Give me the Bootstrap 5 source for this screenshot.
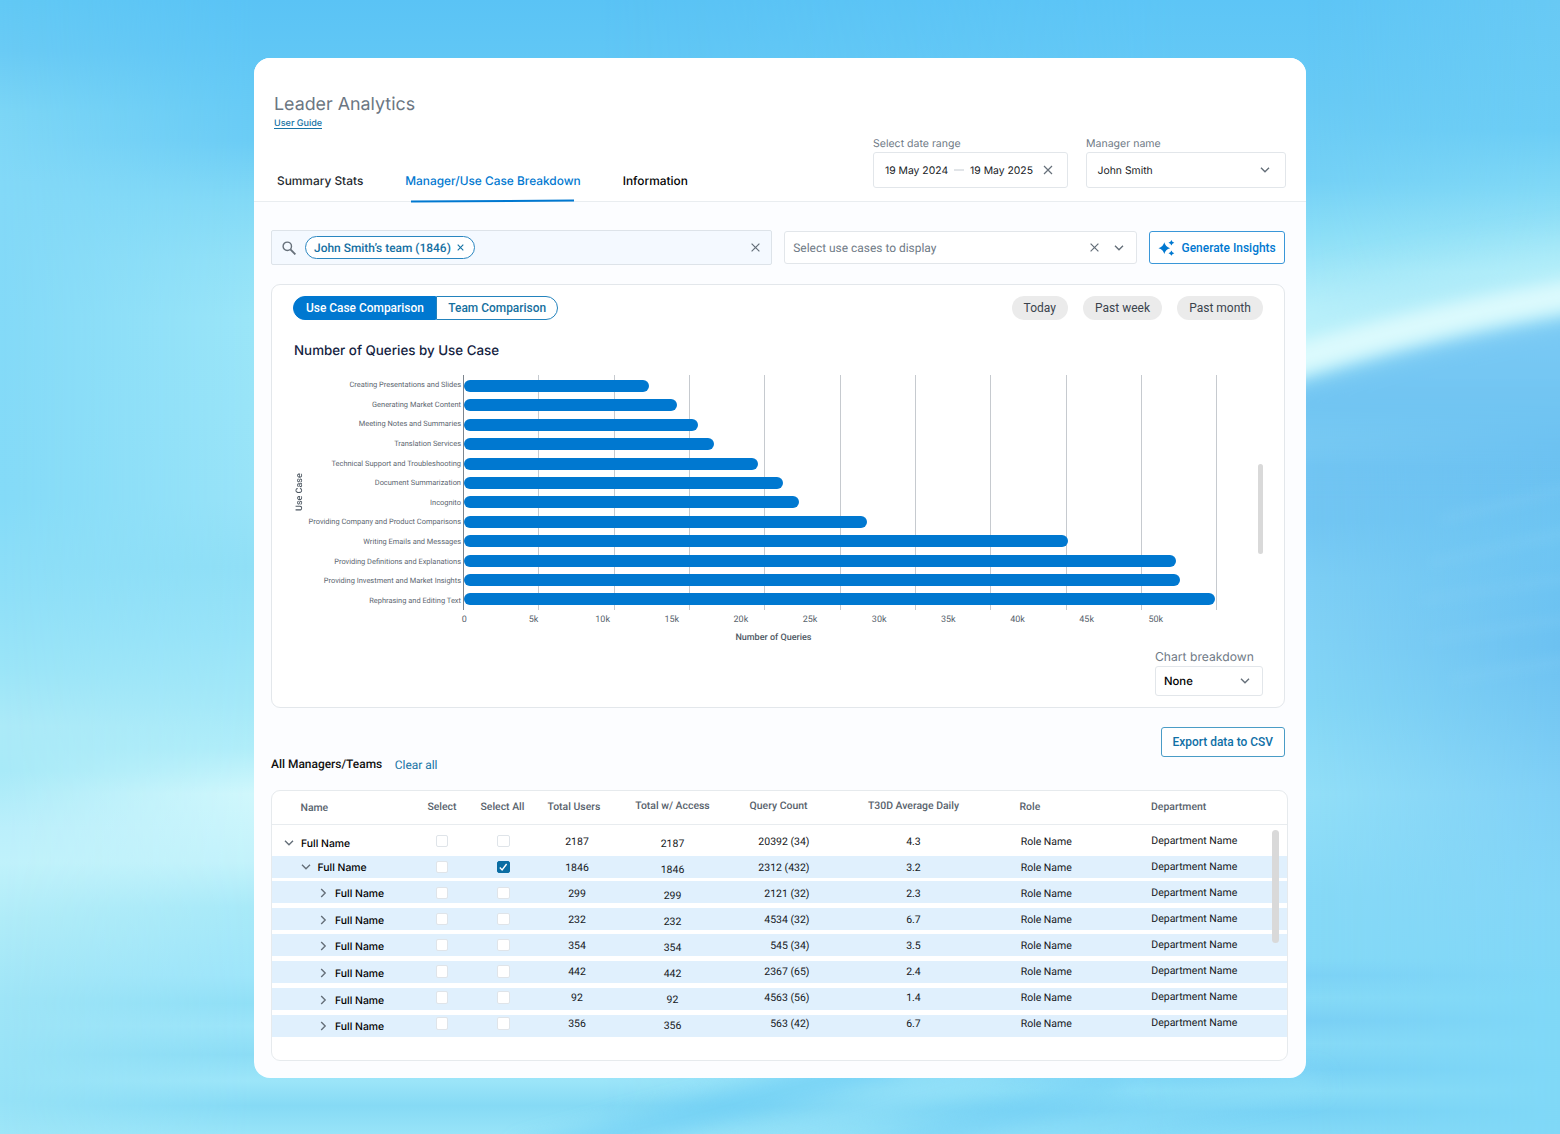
<!doctype html>
<html lang="en">
<head>
<meta charset="utf-8">
<title>Leader Analytics</title>
<meta name="viewport" content="width=device-width, initial-scale=1">
<link href="https://cdn.jsdelivr.net/npm/bootstrap@5.3.0/dist/css/bootstrap.min.css" rel="stylesheet">
<style>
:root{--brand:#0078d0;--link:#0f70a6;--line:#e2e6ea;--muted:#6f7a86;--inter:Inter,"Open Sans",sans-serif;--roboto:Roboto,"Open Sans",sans-serif}
body{font-family:var(--roboto);font-size:11.94px;line-height:16px;color:#1c1f23;overflow:hidden;background:#86daf7;text-rendering:geometricPrecision}
.backdrop{position:absolute;inset:0;width:1560px;height:1134px;z-index:-1}
.stage{width:1560px;height:1134px;padding:58px 254px 56px}
.panel{height:1020px;background:#fcfdff;border-radius:16px;overflow:hidden}
svg.ico{display:block;flex:none;fill:none;stroke:#66707a;stroke-width:1.4}
.nudge{padding-top:2px}
.nudge-sm{padding-top:1px}
.top-bar{height:144px;background:#fff;border-bottom:1px solid #e9edf0;padding:0 20.5px 0 20px}
.page-title{font:400 17.85px/26px var(--inter);color:#6b7682;margin:34px 0 0}
.guide{font:500 9.05px/13px var(--inter);height:12px;color:#1673a5;text-decoration:none;border-bottom:1px solid #1673a5;align-self:flex-start;margin-top:-1px}
.tabs{gap:42px;margin:41px 0 0 3px}
.tabs .nav-link{padding:0;font:500 11.88px/22px var(--inter);height:32px;color:#22272d;position:relative}
.tabs .nav-link.last-tab{color:#000}
.tabs .nav-link.active{color:var(--brand)}
.tabs .nav-link.active::after{content:"";position:absolute;left:6px;right:6px;bottom:0;height:2px;background:var(--brand);transform:rotate(-.3deg)}
.filters{gap:18px;padding-bottom:13.5px}
.field-label{font:400 10.55px/16px var(--inter);color:#6f7a86}
.field{height:36px;border:1px solid var(--line);border-radius:3px;background:#fff;font:400 10.38px/16px var(--inter);color:#16191d}
.content{padding:28px 17px 0}
.tools{gap:12px;width:1014px;height:35px}
.search-box{width:501px;height:35px;background:#f4f9ff;border:1px solid #dde3e9;border-radius:2px;padding:0 11px 0 10px}
.chip{height:23px;border:1px solid #2a86c0;border-radius:12px;background:#fff;color:#156fa2;font-weight:500;padding:0 10px 0 8px;gap:6px;margin-left:9px}
.case-select{width:353px;height:33px;border:1px solid var(--line);border-radius:3px;background:#fff;color:#6f7a86;padding:0 12px 0 8.5px}
.btn-line{border:1px solid #3a97d8;border-radius:3px;background:#fff;color:var(--brand);font:500 11.95px/16px var(--roboto);padding:0;white-space:nowrap}
.chart-card{width:1014px;height:424px;margin-top:19px;border:1px solid #e3e7eb;border-radius:9px;background:#fff;padding:11px 21px 0 21.4px}
.switcher .btn{height:24px;padding:0;font:500 11.93px/16px var(--roboto);border:1px solid #2383bd;color:#156f9e;background:#fff}
.switcher .btn.active{background:var(--brand);border-color:var(--brand);color:#fff}
.range{height:24px;border-radius:12px;background:#ebebeb;color:#3a434d;font:400 12px/24px var(--roboto);padding:0;border:0}
.chart-title{font:500 13.36px/22px var(--inter);height:20px;color:#14233f;margin:20px 0 0 .6px}
.plot-row{height:235px;margin-top:15px}
.y-title{width:12px;margin-left:1px;font:500 9px/12px var(--roboto);color:#4f5963;writing-mode:vertical-rl;transform:rotate(180deg);text-align:center}
.labels{width:154.6px;font-size:7.44px;line-height:19.6px;color:#5d6771;text-align:right;white-space:nowrap;padding-top:.2px}
.labels div{height:19.6px}
.plot{display:grid;width:756px;margin-left:2px;height:235px}
.plot>*{grid-area:1/1}
.grid-line{width:75.35px;border-left:1px solid #c6cacf}
.grid-line:first-child{border-color:#7d858e}
.grid-line:last-child{width:1px}
.bars{padding:1.3px 0 0 .8px}
.bar-slot{height:19.41px}
.bar-fill{height:12px;border-radius:6px;background:var(--brand)}
.thumb{background:#d9d9d9;border-radius:4px}
.ticks{height:19px;margin-left:136.4px}
.ticks div{width:69.15px;text-align:center;font-size:9px;line-height:21px;color:#59636d}
.x-title{font:500 9px/19px var(--roboto);height:17px;color:#4f5963;margin-left:442px}
.breakdown{width:108px;margin-left:auto;margin-top:2px}
.breakdown .caption-text{font:400 12.15px/17px var(--inter);height:16px;color:#6f7a86}
.breakdown .field{height:30px;margin-top:2px;font:500 11.3px/16px var(--inter);color:#000;padding:0 12px 0 8px}
.export{width:124.5px;height:30px;color:#0f70a6;border-color:#4a9cc6}
.export-row{width:1014px;margin-top:19px}
.list-head{height:15px}
.list-head .strong-text{font:500 11.95px/15px var(--roboto);color:#111}
.team-table{width:1017px;height:271px;margin-top:18px;border:1px solid #e6eaed;border-radius:9px;background:#fff;overflow:hidden}
.t-head{height:34px;border-bottom:1px solid #e8ecef;font-weight:500;font-size:10.45px;line-height:15.5px;color:#59636d}
.t-body{display:grid;height:235px;font-size:10.5px;color:#15181c}
.t-body>*{grid-area:1/1}
.band{height:22px;background:#e0f0fd;margin-top:5px}
.band:first-child{margin-top:31px}.band:nth-child(2){margin-top:3px}.band:nth-child(4){margin-top:4px}
.c-name{width:140px}.c-sel{width:60px}.c-all{width:63px}.c-users{width:84px}.c-acc{width:107px}.c-qry{width:83.5px}.c-avg{width:208px}.c-role{width:130.5px;padding-left:3.2px}.c-dep{width:120px;padding-left:3.3px}
.t-body .c{padding-top:3px}.t-body .c-acc{padding-top:5px}.t-body .c-dep{padding-top:2px}
.cell{height:26.07px;line-height:27px;white-space:nowrap}
.t-body .c-name{padding-top:7.35px;font:500 10.42px/16px var(--inter);color:#000}
.node{height:26.7px;gap:6px;padding-left:45px}
.node.root{height:21.3px;padding-left:11px}
.node.child{height:26px;padding-left:27.5px}
.tick-box{width:12.4px;height:12.4px;border:1px solid #dfe4e9;border-radius:2px;background:#fff}
.tick-box.on{background:#0b6da3;border-color:#0b6da3}
.t-scroll{width:7.5px;height:113px;margin:5px 8px 0 auto}
</style>
</head>
<body>
<svg class="backdrop" viewBox="0 0 1560 1134" preserveAspectRatio="none" aria-hidden="true">
<defs>
<linearGradient id="a" x1="0" x2="0" y1="0" y2="1134" gradientUnits="userSpaceOnUse"><stop offset="0" stop-color="#62c9f5"/><stop offset=".045" stop-color="#6acbf5"/><stop offset=".1" stop-color="#7cd6f6"/><stop offset=".16" stop-color="#83d9f8"/><stop offset=".44" stop-color="#84dbf8"/><stop offset=".53" stop-color="#90e0f8"/><stop offset=".59" stop-color="#9be5f8"/><stop offset=".64" stop-color="#aceaf8"/><stop offset=".68" stop-color="#a8eaf8"/><stop offset=".73" stop-color="#bbeffb"/><stop offset=".76" stop-color="#c0f2fb"/><stop offset=".81" stop-color="#b0ecf8"/><stop offset=".88" stop-color="#9fe5f7"/><stop offset=".97" stop-color="#96e2f7"/><stop offset="1" stop-color="#9ee6f8"/></linearGradient>
<linearGradient id="b" x1="0" x2="0" y1="0" y2="1134" gradientUnits="userSpaceOnUse"><stop offset="0" stop-color="#5ac3f5"/><stop offset=".09" stop-color="#66caf5"/><stop offset=".125" stop-color="#6bccf5"/><stop offset=".176" stop-color="#82d9f6"/><stop offset=".23" stop-color="#92e1f7"/><stop offset=".28" stop-color="#9ae5f8"/><stop offset=".44" stop-color="#98e3f8"/><stop offset=".5" stop-color="#90dff6"/><stop offset=".56" stop-color="#98e3f8"/><stop offset=".62" stop-color="#a4e8f8"/><stop offset=".66" stop-color="#b0edf9"/><stop offset=".7" stop-color="#d0f7fc"/><stop offset=".76" stop-color="#c3f2fb"/><stop offset=".8" stop-color="#a8e9f8"/><stop offset=".86" stop-color="#9ee5fa"/><stop offset=".885" stop-color="#90dff6"/><stop offset=".905" stop-color="#9be4f9"/><stop offset=".93" stop-color="#8bdcf5"/><stop offset=".953" stop-color="#9ce5f9"/><stop offset=".975" stop-color="#86daf5"/><stop offset="1" stop-color="#98e4f8"/></linearGradient>
<linearGradient id="c" x1="0" x2="0" y1="0" y2="1134" gradientUnits="userSpaceOnUse"><stop offset="0" stop-color="#5dc5f6"/><stop offset=".09" stop-color="#68caf5"/><stop offset=".16" stop-color="#74d1f6"/><stop offset=".21" stop-color="#8cdff7"/><stop offset=".255" stop-color="#aaeaf9"/><stop offset=".3" stop-color="#c4f3fb"/><stop offset=".36" stop-color="#90dbf5"/><stop offset=".41" stop-color="#72c5f3"/><stop offset=".46" stop-color="#72c6f3"/><stop offset=".51" stop-color="#7ccef5"/><stop offset=".57" stop-color="#82d3f6"/><stop offset=".62" stop-color="#84d7f6"/><stop offset=".7" stop-color="#92dff8"/><stop offset=".79" stop-color="#86d9f7"/><stop offset=".845" stop-color="#84d9f7"/><stop offset=".86" stop-color="#7cd2f6"/><stop offset=".88" stop-color="#86daf7"/><stop offset=".9" stop-color="#7ad0f5"/><stop offset=".92" stop-color="#86daf7"/><stop offset=".943" stop-color="#78d1f5"/><stop offset=".962" stop-color="#88dcf7"/><stop offset=".98" stop-color="#78d2f5"/><stop offset="1" stop-color="#84daf7"/></linearGradient>
<linearGradient id="d" x1="0" x2="0" y1="0" y2="1134" gradientUnits="userSpaceOnUse"><stop offset="0" stop-color="#68c9f4"/><stop offset=".115" stop-color="#6ccdf5"/><stop offset=".168" stop-color="#82d9f6"/><stop offset=".212" stop-color="#9ce4f7"/><stop offset=".24" stop-color="#a8e9f8"/><stop offset=".28" stop-color="#8cd4f5"/><stop offset=".31" stop-color="#74c5f3"/><stop offset=".39" stop-color="#6abff0"/><stop offset=".47" stop-color="#6ec5f2"/><stop offset=".57" stop-color="#6cc1f1"/><stop offset=".635" stop-color="#76c8f3"/><stop offset=".7" stop-color="#80d0f6"/><stop offset=".79" stop-color="#84d6f7"/><stop offset=".88" stop-color="#80d8f7"/><stop offset="1" stop-color="#80d8f7"/></linearGradient>
<linearGradient id="e" x1="0" x2="0" y1="310" y2="480" gradientUnits="userSpaceOnUse"><stop offset="0" stop-color="#7ccbf5"/><stop offset=".6" stop-color="#70c4f2"/><stop offset="1" stop-color="#70c5f3" stop-opacity="0"/></linearGradient>
<linearGradient id="h0" x1="0" x2="254" y1="0" y2="0" gradientUnits="userSpaceOnUse"><stop stop-color="#000"/><stop offset="1" stop-color="#fff"/></linearGradient>
<linearGradient id="h1" x1="600" x2="1180" y1="0" y2="0" gradientUnits="userSpaceOnUse"><stop stop-color="#000"/><stop offset="1" stop-color="#fff"/></linearGradient>
<linearGradient id="h2" x1="1306" x2="1560" y1="0" y2="0" gradientUnits="userSpaceOnUse"><stop stop-color="#000"/><stop offset="1" stop-color="#fff"/></linearGradient>
<mask id="m0"><path fill="url(#h0)" d="M0 0h1560v1134H0z"/></mask><mask id="m1"><path fill="url(#h1)" d="M0 0h1560v1134H0z"/></mask><mask id="m2"><path fill="url(#h2)" d="M0 0h1560v1134H0z"/></mask>
<filter id="s5" x="-20%" y="-50%" width="140%" height="200%"><feGaussianBlur stdDeviation="6"/></filter>
<filter id="s7" x="-20%" y="-50%" width="140%" height="200%"><feGaussianBlur stdDeviation="8"/></filter>
<filter id="s9" x="-20%" y="-80%" width="140%" height="260%"><feGaussianBlur stdDeviation="11"/></filter>
<filter id="s20" x="-20%" y="-80%" width="140%" height="260%"><feGaussianBlur stdDeviation="22"/></filter>
</defs>
<path fill="url(#a)" d="M0 0h1560v1134H0z"/>
<path fill="url(#b)" mask="url(#m0)" d="M0 0h1560v1134H0z"/>
<path fill="url(#c)" mask="url(#m1)" d="M0 0h1560v1134H0z"/>
<path fill="url(#d)" mask="url(#m2)" d="M0 0h1560v1134H0z"/>
<path d="M1180 372Q1400 300 1680 270" fill="none" stroke="#b8f0fa" stroke-width="50" filter="url(#s20)"/>
<path d="M1180 425Q1400 335 1700 308V480H1180z" fill="url(#e)" filter="url(#s9)"/>
<path d="M1180 400Q1400 314 1700 275" fill="none" stroke="#dcfafd" stroke-width="30" filter="url(#s7)"/>
<g fill="none" opacity=".7" filter="url(#s9)">
<path d="M520 1160L900 1060" stroke="#6ccdf5" stroke-width="26"/><path d="M700 1160L1000 1070" stroke="#94e1f8" stroke-width="20"/><path d="M820 1170L1120 1080" stroke="#74d0f5" stroke-width="18"/><path d="M930 1160L1320 1080" stroke="#8bddf8" stroke-width="16"/>
</g>
<g fill="none" stroke="#8dd2f6" stroke-width="8" opacity=".25" filter="url(#s5)"><path d="M1440 520L1570 488M1430 563L1570 532M1420 600L1570 578M1430 640L1570 618M1450 680L1570 660"/></g>
</svg>

<main class="stage">
<div class="panel">
<header class="top-bar d-flex justify-content-between">
  <div class="d-flex flex-column">
    <h1 class="page-title">Leader Analytics</h1>
    <a class="guide" href="#">User Guide</a>
    <nav class="nav tabs flex-nowrap">
      <a class="nav-link" href="#">Summary Stats</a>
      <a class="nav-link active" href="#">Manager/Use Case Breakdown</a>
      <a class="nav-link last-tab" href="#">Information</a>
    </nav>
  </div>
  <div class="filters d-flex align-items-end">
    <div>
      <div class="field-label">Select date range</div>
      <div class="field d-flex align-items-center" style="width:195px;padding-left:11px">
        <span class="nudge">19 May 2024</span>
        <svg class="ico" style="margin:0 6px" width="10" height="2"><path d="M0 1h10" stroke="#c3cad1" stroke-width="1"/></svg>
        <span class="nudge">19 May 2025</span>
        <svg class="ico" style="margin-left:10px" width="10" height="10"><path d="M1 1l8 8M9 1l-8 8" stroke-width="1.2"/></svg>
      </div>
    </div>
    <div>
      <div class="field-label">Manager name</div>
      <div class="field d-flex align-items-center justify-content-between" style="width:199.5px;padding:0 14.5px 0 10.6px">
        <span class="nudge">John Smith</span>
        <svg class="ico" width="10" height="6"><path d="M1 .8l4 4 4-4"/></svg>
      </div>
    </div>
  </div>
</header>

<section class="content">
  <div class="tools d-flex align-items-center">
    <div class="search-box d-flex align-items-center">
      <svg class="ico" width="14" height="14"><circle cx="5.3" cy="5.3" r="4.2"/><path d="M8.4 8.4l5 5" stroke-width="1.9"/></svg>
      <span class="chip d-flex align-items-center"><span class="nudge-sm">John Smith’s team (1846)</span><svg class="ico" style="stroke:#1673a5" width="7" height="7"><path d="M.7.7l5.6 5.6M6.3.7L.7 6.3" stroke-width="1.1"/></svg></span>
      <svg class="ico ms-auto" width="9" height="9"><path d="M.6.6l7.8 7.8M8.4.6L.6 8.4" stroke-width="1.2"/></svg>
    </div>
    <div class="case-select d-flex align-items-center">
      <span class="nudge-sm">Select use cases to display</span>
      <svg class="ico ms-auto" width="9" height="9"><path d="M.6.6l7.8 7.8M8.4.6L.6 8.4" stroke-width="1.2"/></svg>
      <svg class="ico" style="margin-left:14.5px" width="10" height="6"><path d="M1 .8l4 4 4-4"/></svg>
    </div>
    <button class="btn btn-line d-flex align-items-center" style="width:136.5px;height:33px;padding-left:8.5px;gap:6.5px">
      <svg class="ico" style="fill:#0078d0;stroke:none" width="17" height="16"><path d="M6.3 2.3Q7.4 7 12.1 8.2 7.4 9.4 6.3 14 5.2 9.4 .5 8.2 5.2 7 6.3 2.3zM13.4 0q.6 2.2 2.9 2.8-2.3.6-2.9 2.8-.6-2.2-2.9-2.8 2.3-.6 2.9-2.8zM13.4 10.4q.6 2.2 2.9 2.8-2.3.6-2.9 2.8-.6-2.2-2.9-2.8 2.3-.6 2.9-2.8z"/></svg>
      <span class="nudge-sm">Generate Insights</span>
    </button>
  </div>

  <div class="chart-card">
    <div class="d-flex justify-content-between">
      <div class="switcher d-flex">
        <button class="btn active rounded-0 rounded-start-pill" style="width:143px">Use Case Comparison</button>
        <button class="btn rounded-0 rounded-end-pill" style="width:121.6px">Team Comparison</button>
      </div>
      <div class="d-flex" style="gap:15px">
        <button class="btn range" style="width:56.5px">Today</button>
        <button class="btn range" style="width:79px">Past week</button>
        <button class="btn range" style="width:86px">Past month</button>
      </div>
    </div>
    <h2 class="chart-title">Number of Queries by Use Case</h2>
    <div class="plot-row d-flex">
      <div class="y-title">Use Case</div>
      <div class="labels" id="labels"></div>
      <div class="plot">
        <div class="d-flex" id="gridlines"></div>
        <div class="bars" id="bars"></div>
      </div>
      <div class="thumb ms-auto" style="width:5px;height:90px;margin-top:89px"></div>
    </div>
    <div class="ticks d-flex" id="ticks"></div>
    <div class="x-title">Number of Queries</div>
    <div class="breakdown">
      <div class="caption-text text-nowrap">Chart breakdown</div>
      <div class="field d-flex align-items-center justify-content-between"><span>None</span><svg class="ico" width="10" height="6"><path d="M1 .8l4 4 4-4"/></svg></div>
    </div>
  </div>

  <div class="export-row d-flex justify-content-end"><button class="btn btn-line export">Export data to CSV</button></div>
  <div class="list-head d-flex align-items-center"><span class="strong-text">All Managers/Teams</span><a href="#" class="text-decoration-none" style="color:#1673a5;margin-left:12.5px;padding-top:1px">Clear all</a></div>

  <div class="team-table">
    <div class="t-head d-flex">
      <div class="c-name" style="padding:9px 0 0 28.5px">Name</div>
      <div class="c-sel text-center" style="padding-top:8px">Select</div>
      <div class="c-all" style="padding:8px 0 0 8.5px">Select All</div>
      <div class="c-users" style="padding:8px 0 0 12.5px">Total Users</div>
      <div class="c-acc text-center" style="padding-top:7px">Total w/ Access</div>
      <div class="c-qry text-end" style="padding:7px 2px 0 0">Query Count</div>
      <div class="c-avg text-center" style="padding-top:7px">T30D Average Daily</div>
      <div class="c-role" style="padding:8px 0 0 2px">Role</div>
      <div class="c-dep" style="padding:8px 0 0 3px">Department</div>
    </div>
    <div class="t-body">
      <div id="bands"></div>
      <div class="d-flex" id="cols"></div>
    </div>
  </div>
</section>
</div>
</main>

<script src="https://cdn.jsdelivr.net/npm/bootstrap@5.3.0/dist/js/bootstrap.bundle.min.js"></script>
<script>
const put = (id, html) => document.getElementById(id).innerHTML = html;
const cases = [["Creating Presentations and Slides",185.5],["Generating Market Content",213],["Meeting Notes and Summaries",234.5],["Translation Services",250],["Technical Support and Troubleshooting",294],["Document Summarization",319.5],["Incognito",335],["Providing Company and Product Comparisons",403.5],["Writing Emails and Messages",604.5],["Providing Definitions and Explanations",712.5],["Providing Investment and Market Insights",716],["Rephrasing and Editing Text",751.5]];
put('labels', cases.map(c => `<div>${c[0]}</div>`).join(''));
put('bars', cases.map(c => `<div class="bar-slot d-flex align-items-center"><div class="bar-fill" style="width:${c[1]}px"></div></div>`).join(''));
put('gridlines', '<div class="grid-line flex-shrink-0"></div>'.repeat(11));
put('ticks', ['0','5k','10k','15k','20k','25k','30k','35k','40k','45k','50k'].map(t => `<div>${t}</div>`).join(''));
put('bands', '<div class="band"></div>'.repeat(7));

const rows = [["2187","20392 (34)","4.3"],["1846","2312 (432)","3.2"],["299","2121 (32)","2.3"],["232","4534 (32)","6.7"],["354","545 (34)","3.5"],["442","2367 (65)","2.4"],["92","4563 (56)","1.4"],["356","563 (42)","6.7"]];
const down = '<svg class="ico" width="12" height="10"><path d="M2 2.8l4 4 4-4"/></svg>', right = '<svg class="ico" width="12" height="10"><path d="M4.2.9l4 4.1-4 4.1"/></svg>';
const box = on => `<div class="cell d-flex align-items-center justify-content-center"><span class="tick-box ${on ? 'on' : ''}">${on ? '<svg class="ico" style="stroke:#fff" width="10.4" height="10.4"><path d="M1.8 5.6l2.3 2.4 4.5-6"/></svg>' : ''}</span></div>`;
const col = (cls, f) => `<div class="c ${cls}">${rows.map(f).join('')}</div>`;
const text = k => r => `<div class="cell">${r[k]}</div>`;
put('cols',
  col('c-name', (r, i) => `<div class="node d-flex align-items-center ${['root','child'][i] || ''}">${i < 2 ? down : right}<span class="nudge">Full Name</span></div>`) +
  col('c-sel', () => box(false)) + col('c-all', (r, i) => box(i === 1)) +
  col('c-users text-center', text(0)) + col('c-acc text-center', text(0)) +
  col('c-qry text-end', text(1)) + col('c-avg text-center', text(2)) +
  col('c-role', () => '<div class="cell">Role Name</div>') + col('c-dep', () => '<div class="cell">Department Name</div>') +
  '<div class="thumb t-scroll"></div>');
</script>
</body>
</html>
